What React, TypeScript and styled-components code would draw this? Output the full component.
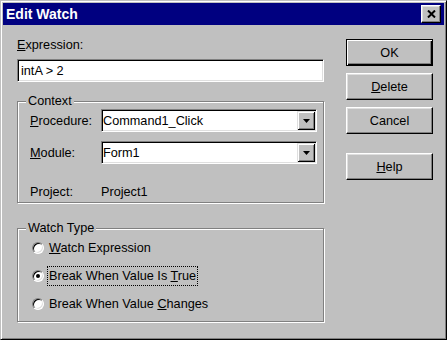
import React from "react";
import styled, { createGlobalStyle, css } from "styled-components";

const GlobalStyle = createGlobalStyle`
  html, body { margin: 0; padding: 0; background: #c0c0c0; }
  body {
    font-family: "Liberation Sans", Arial, sans-serif;
    font-size: 12.7px;
    color: #000;
  }
`;

const Window = styled.div`
  box-sizing: border-box;
  width: 447px;
  height: 340px;
  background: #c0c0c0;
  border: 1px solid;
  border-color: #c0c0c0 #000 #000 #c0c0c0;
  box-shadow: inset 1px 1px #fff, inset -1px -1px #808080;
  padding: 2px;
  display: flex;
  flex-direction: column;
`;

const TitleBar = styled.div`
  height: 22px;
  flex: none;
  background: #000080;
  color: #fff;
  display: flex;
  align-items: center;
  justify-content: space-between;
  padding: 0 3px;
`;

const Title = styled.span`
  font-weight: bold;
  font-size: 14px;
`;

const CloseButton = styled.button`
  box-sizing: border-box;
  width: 20px;
  height: 18px;
  padding: 0;
  background: #c0c0c0;
  border: 1px solid;
  border-color: #fff #000 #000 #fff;
  box-shadow: inset -1px -1px #808080, inset 1px 1px #dfdfdf;
  display: flex;
  align-items: center;
  justify-content: center;
`;

const Body = styled.div`
  flex: 1;
  display: flex;
  gap: 22px;
  padding-left: 14px;
`;

const LeftCol = styled.div`
  width: 307px;
  display: flex;
  flex-direction: column;
`;

const RightCol = styled.div`
  width: 87px;
  display: flex;
  flex-direction: column;
  padding-top: 14px;
`;

const FieldLabel = styled.div`
  margin-top: 12px;
  line-height: 16px;
`;

const TextField = styled.input`
  box-sizing: border-box;
  margin-top: 6px;
  width: 100%;
  height: 23px;
  background: #fff;
  border: 1px solid;
  border-color: #808080 #fff #fff #808080;
  box-shadow: inset 1px 1px #000, inset -1px -1px #dfdfdf;
  padding: 0 3px;
  font: inherit;
  color: #000;
  outline: none;
`;

const Group = styled.fieldset<{ $top: number; $bottom: number }>`
  margin: ${({ $top }) => $top}px 0 0;
  padding: 0 6px ${({ $bottom }) => $bottom}px 8px;
  border: 1px solid #808080;
  box-shadow: inset 1px 1px #fff, 1px 1px #fff;
  min-width: 0;
`;

const Legend = styled.legend`
  padding: 0 2px;
  line-height: 16px;
  background: #c0c0c0;
`;

const Row = styled.div<{ $gap: number }>`
  display: grid;
  grid-template-columns: 71px 1fr;
  align-items: center;
  margin-top: ${({ $gap }) => $gap}px;
  padding-left: 4px;
  line-height: 16px;
`;

const Combo = styled.div`
  box-sizing: border-box;
  height: 23px;
  display: flex;
  align-items: center;
  background: #fff;
  border: 1px solid;
  border-color: #808080 #fff #fff #808080;
  box-shadow: inset 1px 1px #000, inset -1px -1px #dfdfdf;
  padding: 1px;
`;

const ComboText = styled.span`
  flex: 1;
`;

const ComboButton = styled.span`
  box-sizing: border-box;
  width: 18px;
  align-self: stretch;
  background: #c0c0c0;
  box-shadow: inset 1px 1px #dfdfdf, inset -1px -1px #000, inset 2px 2px #fff,
    inset -2px -2px #808080;
  display: flex;
  align-items: center;
  justify-content: center;
`;

const RadioList = styled.div`
  display: flex;
  flex-direction: column;
  gap: 8px;
  padding: 2px 0 3px 6px;
`;

const RadioRow = styled.label`
  display: flex;
  align-items: center;
  height: 20px;
  gap: 4px;
`;

const RadioCircle = styled.span<{ $checked?: boolean }>`
  box-sizing: border-box;
  width: 12px;
  height: 12px;
  border-radius: 50%;
  background: #fff;
  border: 1px solid;
  border-color: #808080 #fff #fff #808080;
  box-shadow: inset 1px 1px #000, inset -1px -1px #dfdfdf;
  display: flex;
  align-items: center;
  justify-content: center;
  &::after {
    content: "";
    width: 4px;
    height: 4px;
    border-radius: 50%;
    background: #000;
    display: ${({ $checked }) => ($checked ? "block" : "none")};
  }
`;

const RadioText = styled.span<{ $focused?: boolean }>`
  padding: 0 1px;
  line-height: 18px;
  ${({ $focused }) =>
    $focused &&
    css`
      outline: 1px dotted #000;
    `}
`;

const Button = styled.button<{ $gap: number; $default?: boolean }>`
  box-sizing: border-box;
  width: 87px;
  height: 27px;
  margin-top: ${({ $gap }) => $gap}px;
  padding: 0;
  font: inherit;
  color: #000;
  background: #c0c0c0;
  border: 1px solid;
  border-color: #fff #000 #000 #fff;
  box-shadow: inset -1px -1px #808080, inset 1px 1px #dfdfdf;
  ${({ $default }) =>
    $default &&
    css`
      border-color: #000;
      box-shadow: inset 1px 1px #fff, inset -1px -1px #000,
        inset -2px -2px #808080;
    `}
`;

const DownArrow = () => (
  <svg width="7" height="4" viewBox="0 0 7 4">
    <polygon points="0,0 7,0 3.5,4" fill="#000" />
  </svg>
);

const CloseGlyph = () => (
  <svg width="9" height="8" viewBox="0 0 9 8">
    <path d="M1 0.5 L8 7.5 M8 0.5 L1 7.5" stroke="#000" strokeWidth="2" />
  </svg>
);

export default function App() {
  return (
    <>
      <GlobalStyle />
      <Window>
        <TitleBar>
          <Title>Edit Watch</Title>
          <CloseButton aria-label="Close">
            <CloseGlyph />
          </CloseButton>
        </TitleBar>
        <Body>
          <LeftCol>
            <FieldLabel>
              <u>E</u>xpression:
            </FieldLabel>
            <TextField readOnly defaultValue="intA > 2" />

            <Group $top={11} $bottom={2}>
              <Legend>Context</Legend>
              <Row $gap={0}>
                <span>
                  <u>P</u>rocedure:
                </span>
                <Combo>
                  <ComboText>Command1_Click</ComboText>
                  <ComboButton>
                    <DownArrow />
                  </ComboButton>
                </Combo>
              </Row>
              <Row $gap={9}>
                <span>
                  <u>M</u>odule:
                </span>
                <Combo>
                  <ComboText>Form1</ComboText>
                  <ComboButton>
                    <DownArrow />
                  </ComboButton>
                </Combo>
              </Row>
              <Row $gap={20}>
                <span>Project:</span>
                <span>Project1</span>
              </Row>
            </Group>

            <Group $top={17} $bottom={4}>
              <Legend>Watch Type</Legend>
              <RadioList>
                <RadioRow>
                  <RadioCircle />
                  <RadioText>
                    <u>W</u>atch Expression
                  </RadioText>
                </RadioRow>
                <RadioRow>
                  <RadioCircle $checked />
                  <RadioText $focused>
                    Break When Value Is <u>T</u>rue
                  </RadioText>
                </RadioRow>
                <RadioRow>
                  <RadioCircle />
                  <RadioText>
                    Break When Value <u>C</u>hanges
                  </RadioText>
                </RadioRow>
              </RadioList>
            </Group>
          </LeftCol>

          <RightCol>
            <Button $gap={0} $default>
              OK
            </Button>
            <Button $gap={7}>
              <u>D</u>elete
            </Button>
            <Button $gap={7}>Cancel</Button>
            <Button $gap={19}>
              <u>H</u>elp
            </Button>
          </RightCol>
        </Body>
      </Window>
    </>
  );
}
